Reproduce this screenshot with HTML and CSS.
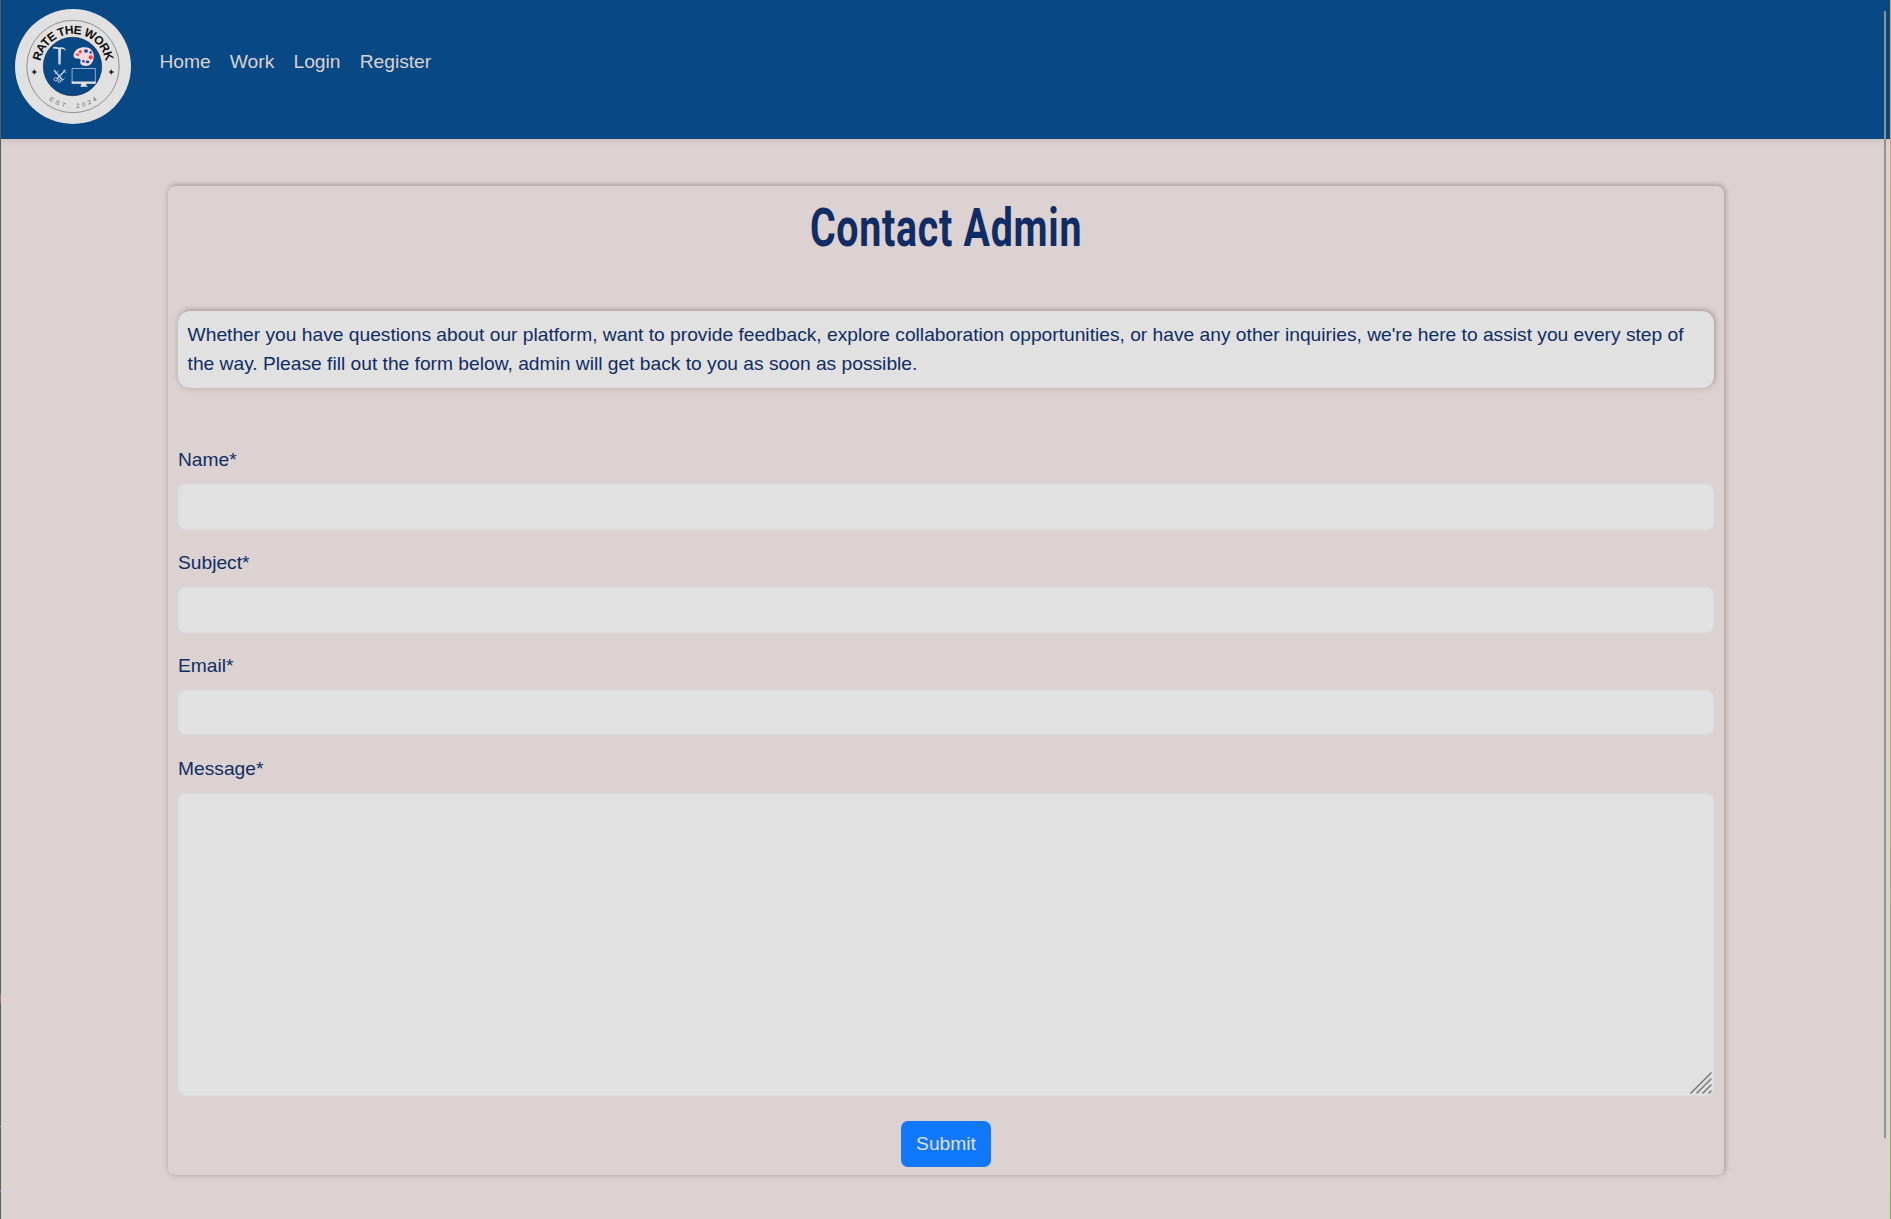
FILE: index.html
```html
<!DOCTYPE html>
<html lang="en">
<head>
<meta charset="utf-8">
<title>Contact Admin</title>
<link rel="stylesheet" href="styles.css">
</head>
<body>
<header class="navbar">
  <a class="brand" href="#" aria-label="Rate the Work">
    <svg class="logo" viewBox="0 0 118 118">
      <defs>
        <path id="arc-top" d="M26 59a33 33 0 0 1 66 0"/>
        <path id="arc-bottom" d="M18.2 59a40.8 40.8 0 0 0 81.6 0"/>
      </defs>
      <ellipse cx="59" cy="58.500" rx="58" ry="57.5" fill="#e1e1e1"/>
      <circle cx="59" cy="58.500" r="46.2" fill="none" stroke="#555" stroke-width=".6"/>
      <circle cx="58.500" cy="58.500" r="29.2" fill="#084884" stroke="#12233c" stroke-width=".6"/>
      <text class="logo-name"><textPath href="#arc-top" startOffset="50%" text-anchor="middle" textLength="92">RATE THE WORK</textPath></text>
      <text class="logo-date"><textPath href="#arc-bottom" startOffset="50%" text-anchor="middle" textLength="51">EST. 2024</textPath></text>
      <path d="M20.3 61.500l.7 1.8 1.8.7-1.8.7-.7 1.8-.7-1.8-1.8-.7 1.8-.7zM97.3 61.500l.7 1.8 1.8.7-1.8.7-.7 1.8-.7-1.8-1.8-.7 1.8-.7z" fill="#111" stroke="#111" stroke-width=".4"/>
      <path d="M39 39.2q3-.9 5.500.4l4-.4q3 .8 3.500 3.800-2-2.200-5-2.200l-.4 15.700h-2.200l-.2-15.600-5.200-.5z" fill="#d5dce5"/>
      <path d="M71 39.300c6 .2 9.300 4.200 8.700 10.200-.4 4.700-3 8.500-7.500 8.500-4.500.2-6.700-2.300-5.700-4.700.8-2-1-3.100-3-2.800-3.500.4-4.700-2.300-3.500-5.200 1.500-4 5.700-6.200 11-6z" fill="#f5d9dc"/>
      <g fill="#ee4348"><circle cx="66.300" cy="43.700" r="1.600"/><ellipse cx="63.500" cy="46.600" rx="2" ry="1.200"/><circle cx="76.700" cy="49.300" r="2.100"/></g>
      <g fill="#24449a"><ellipse cx="72" cy="43" rx="2" ry="1.700"/><circle cx="76.700" cy="44.500" r="1.300"/><ellipse cx="73.600" cy="53.900" rx="1.900" ry="1.400"/><circle cx="69.400" cy="53.300" r="1.300"/></g>
      <g fill="none" stroke="#b8cadd" stroke-width="1">
        <path d="M40 62l8.500 10M51.500 62L43 71" stroke-width="1.500"/>
        <path d="M40.500 66l4-3M49 62l3 3" stroke-width=".7"/>
        <circle cx="41.700" cy="71.300" r="1.600"/><circle cx="45.300" cy="73" r="1.400"/><path d="M47.500 73l3-2.500"/>
        <path d="M58.100 60.500h23.200v14.600H58.100z" stroke-width=".8"/>
      </g>
      <path d="M57.700 73.600h24v2.100h-24zM67.300 75.700h4.800l.5 2.200h1.100v.9h-7.500v-.9h.7z" fill="#e1e1e1"/>
    </svg>
  </a>
  <nav class="links">
    <a href="#">Home</a><a href="#">Work</a><a href="#">Login</a><a href="#">Register</a>
  </nav>
</header>
<main class="card">
  <h1 class="title"><span class="title-text">Contact Admin</span></h1>
  <p class="intro">Whether you have questions about our platform, want to provide feedback, explore collaboration opportunities, or have any other inquiries, we're here to assist you every step of the way. Please fill out the form below, admin will get back to you as soon as possible.</p>
  <form class="form">
    <div class="field"><label for="name">Name*</label><input id="name" type="text"></div>
    <div class="field"><label for="subject">Subject*</label><input id="subject" type="text"></div>
    <div class="field"><label for="email">Email*</label><input id="email" type="email"></div>
    <div class="field">
      <label for="message">Message*</label>
      <div class="area">
        <textarea id="message"></textarea>
        <svg class="grip" viewBox="0 0 22 22"><path d="M1 21L21 1M7 21L21 7M13 21l8-8M19 21l2-2" fill="none" stroke="#777" stroke-width="1.500" stroke-linecap="round"/></svg>
      </div>
    </div>
    <button class="submit" type="button">Submit</button>
  </form>
</main>
<div class="edge edge-left"></div>
<div class="edge edge-right"></div>
<div class="scroll-thumb"></div>
</body>
</html>
```
FILE: styles.css
```css
* { box-sizing: border-box; }

html, body { height: 100%; }

body {
  margin: 0;
  overflow: hidden;
  background: #dcd2d1;
  color: #102c64;
  font: 19.22px/29px "Liberation Sans", Arial, sans-serif;
}

.navbar {
  display: flex;
  align-items: flex-start;
  height: 139px;
  padding: 8px 14px;
  background: #084884;
  box-shadow: 0 2px 5px rgba(80, 40, 40, .1);
}

.brand { display: block; width: 118px; height: 118px; }
.logo { display: block; width: 118px; height: 118px; }
.logo-name { font: bold 12px "Liberation Sans", Arial, sans-serif; fill: #0c0c0c; }
.logo-date { font: 5.8px "Liberation Sans", Arial, sans-serif; fill: #555; }

.links { display: flex; gap: 19.2px; padding: 39px 0 0 27.400px; }
.links a { color: #dcd2d1; text-decoration: none; }

.card {
  width: 1556px;
  height: 989px;
  margin: 47px 0 0 168px;
  padding: 0 10px;
  border-radius: 7px;
  box-shadow: 1px -1px 4px rgba(60, 40, 40, .3), 0 0 8px rgba(80, 45, 45, .1);
}

.title {
  height: 125px;
  margin: 0;
  padding-top: 10px;
  text-align: center;
  font: 700 54px/64px Roboto, "Liberation Sans", sans-serif;
}
.title-text { display: inline-block; transform: scaleX(.728); letter-spacing: 1px; white-space: nowrap; }

.intro {
  height: 77px;
  margin: 0 0 57px;
  padding: 8.600px 9.600px;
  border-radius: 12px;
  background: #e1e1e1;
  box-shadow: 1px -1px 4px rgba(60, 40, 40, .3), 0 0 8px rgba(80, 45, 45, .1);
}

.form { display: flex; flex-direction: column; }
.field { display: flex; flex-direction: column; gap: 10.400px; margin-bottom: 18.200px; }

input, textarea {
  display: block;
  width: 100%;
  height: 45.300px;
  margin: 0;
  padding: 7px 14px;
  border: 1px solid #dadde1;
  border-radius: 7px;
  background: #e1e1e1;
  color: inherit;
  font: inherit;
}
.area { position: relative; }
textarea { height: 303px; resize: none; }
.grip { position: absolute; right: 2px; bottom: 2px; width: 22px; height: 22px; }

.submit {
  align-self: center;
  width: 90px;
  height: 46px;
  margin-top: 6.500px;
  padding: 0;
  border: 0;
  border-radius: 7px;
  background: #1078ff;
  color: #e1e1e1;
  font: inherit;
}

.edge { position: absolute; top: 0; bottom: 0; width: 1px; }
.edge-left {
  left: 0;
  background: linear-gradient(#5c5c5c 994px, #a36f55 994px 1003px, #5c5c5c 1003px 1126px, #aaa 1126px 1127px, #5c5c5c 1127px 1190px, #6a84b8 1190px 1192px, #5c5c5c 1192px);
}
.edge-right { right: 0; background: linear-gradient(#c3ab68, #bfb062 30%, #8ead56); }
.scroll-thumb { position: absolute; left: 1884px; top: 11px; width: 2px; height: 1127px; background: #929292; }
```
